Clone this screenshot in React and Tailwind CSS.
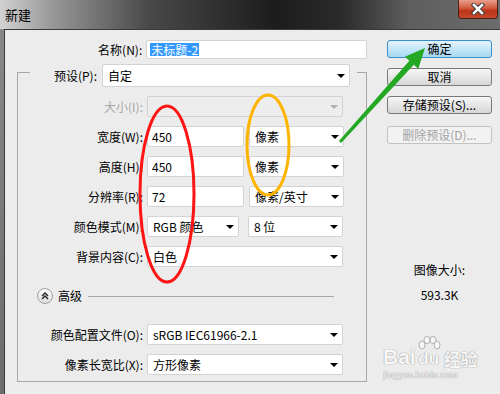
import React from 'react';

const Arrow = ({ disabled }) => (
  <span
    className={`w-0 h-0 border-x-[4px] border-x-transparent border-t-[4px] ${
      disabled ? 'border-t-[#b0b0b0]' : 'border-t-black'
    }`}
  />
);

const Select = ({ w, text, disabled, h = 'h-[21px]' }) => (
  <div
    className={`${w} ${h} flex items-center justify-between rounded-[2px] border pl-[5px] pr-[4px] ${
      disabled ? 'border-[#d2d2d2] bg-[#ededed]' : 'border-[#d3d3d3] bg-white'
    }`}
  >
    <span className="text-[12px] leading-none whitespace-nowrap">{text}</span>
    <Arrow disabled={disabled} />
  </div>
);

const Input = ({ w, text }) => (
  <div className={`${w} h-[21px] flex items-center rounded-[2px] border border-[#d3d3d3] bg-white pl-[4px]`}>
    <span className="text-[12px] leading-none">{text}</span>
  </div>
);

const Row = ({ label, disabled, children }) => (
  <div className="flex items-center h-[21px]">
    <div
      className={`w-[125px] text-right text-[12px] leading-none whitespace-nowrap ${
        disabled ? 'text-[#a8a8a8]' : 'text-black'
      }`}
    >
      {label}
    </div>
    <div className="ml-[4px] flex items-center gap-[5px]">{children}</div>
  </div>
);

const Button = ({ children, primary, disabled }) => (
  <div
    className={`h-[18px] w-[105px] flex items-center justify-center rounded-[3px] border text-[12px] leading-none ${
      primary
        ? 'border-[#3c8fcf] bg-[linear-gradient(to_bottom,#e6f5fd,#c4e6f8_50%,#a6d9f3)] text-black'
        : disabled
        ? 'border-[#c2c2c2] bg-[#f2f2f2] text-[#a2a2a2]'
        : 'border-[#7a7a7a] bg-[linear-gradient(to_bottom,#f6f6f6,#e6e6e6_50%,#d6d6d6)] text-black'
    }`}
  >
    {children}
  </div>
);

export default function App() {
  return (
    <div className="relative w-[500px] h-[394px] overflow-hidden flex flex-col bg-[linear-gradient(to_bottom,#8a8a8a,#6c6c6c)] font-['Noto_Sans_CJK_SC','Microsoft_YaHei',sans-serif] text-black">
      {/* title bar */}
      <div className="h-[29px] flex items-start justify-between bg-[linear-gradient(to_right,#d2d2d2_0%,#9a9a9a_10%,#484848_30%,#1c1c1c_55%,#2a2a2a_68%,#5e5e5e_82%,#6c6c6c_100%)]">
        <span className="pl-[5px] pt-[8px] text-[13px] leading-none">新建</span>
        <div className="mr-[2px] w-[40px] h-[19px] flex items-center justify-center rounded-b-[4px] border border-t-0 border-[#4a2018] bg-[linear-gradient(to_bottom,#e9a08c,#d25a3c_45%,#b8341a_60%,#c8482a)]">
          <svg width="14" height="12" viewBox="0 0 14 12">
            <path d="M3 2 L11 10 M11 2 L3 10" stroke="#3a3a3a" strokeWidth="4.5" strokeLinecap="square" />
            <path d="M3 2 L11 10 M11 2 L3 10" stroke="#ffffff" strokeWidth="2.5" strokeLinecap="square" />
          </svg>
        </div>
      </div>

      {/* body */}
      <div className="flex-1 ml-[4px] border-l border-t border-[#3a3a3a] bg-[#ececec] flex">
        <div className="w-[362px] flex flex-col">
          {/* name */}
          <div className="mt-[10px] flex items-center h-[19px]">
            <div className="w-[138px] text-right text-[12px] leading-none">名称(N):</div>
            <div className="ml-[4px] w-[222px] h-[19px] flex items-center rounded-[2px] border border-[#d3d3d3] bg-white pl-[3px]">
              <span className="bg-[#3399ff] text-white text-[12px] leading-[13px] px-[1px]">未标题-2</span>
            </div>
          </div>

          {/* preset fieldset */}
          <div className="mt-[13px] ml-[12px] w-[350px] border border-[#a8a8a8] pb-[6px] flex flex-col">
            <div className="-mt-[9px] ml-[12px] w-[327px] bg-[#ececec] flex items-center h-[23px]">
              <div className="w-[67px] text-right text-[12px] leading-none">预设(P):</div>
              <div className="ml-[5px]">
                <Select w="w-[248px]" h="h-[23px]" text="自定" />
              </div>
            </div>

            <div className="mt-[9px] flex flex-col gap-[9px]">
              <Row label="大小(I):" disabled>
                <Select w="w-[196px]" text="" disabled />
              </Row>
              <Row label="宽度(W):">
                <Input w="w-[97px]" text="450" />
                <Select w="w-[95px]" text="像素" />
              </Row>
              <Row label="高度(H):">
                <Input w="w-[97px]" text="450" />
                <Select w="w-[95px]" text="像素" />
              </Row>
              <Row label="分辨率(R):">
                <Input w="w-[97px]" text="72" />
                <Select w="w-[95px]" text="像素/英寸" />
              </Row>
              <Row label="颜色模式(M):">
                <Select w="w-[92px]" text="RGB 颜色" />
                <div className="ml-[4px]">
                  <Select w="w-[95px]" text="8 位" />
                </div>
              </Row>
              <Row label="背景内容(C):">
                <Select w="w-[196px]" text="白色" />
              </Row>
            </div>

            {/* advanced */}
            <div className="mt-[21px] h-[16px] flex items-center">
              <div className="ml-[19px] w-[16px] h-[16px] rounded-full border border-[#a0a0a0] bg-[linear-gradient(to_bottom,#ffffff,#dcdcdc)] flex items-center justify-center">
                <svg width="8" height="8" viewBox="0 0 8 8">
                  <path d="M1 4 L4 1 L7 4 M1 7 L4 4 L7 7" stroke="#222" strokeWidth="1.4" fill="none" />
                </svg>
              </div>
              <span className="ml-[5px] text-[12px] leading-none">高级</span>
              <div className="ml-[6px] mr-[32px] flex-1 h-px bg-[#a8a8a8]" />
            </div>

            <div className="mt-[20px] flex flex-col gap-[9px]">
              <Row label="颜色配置文件(O):">
                <Select w="w-[196px]" text="sRGB IEC61966-2.1" />
              </Row>
              <Row label="像素长宽比(X):">
                <Select w="w-[196px]" text="方形像素" />
              </Row>
            </div>
          </div>
        </div>

        {/* right column */}
        <div className="ml-auto mr-[8px] w-[105px] flex flex-col">
          <div className="mt-[10px] flex flex-col gap-[10px]">
            <Button primary>确定</Button>
            <Button>取消</Button>
            <Button>存储预设(S)...</Button>
          </div>
          <div className="mt-[12px]">
            <Button disabled>删除预设(D)...</Button>
          </div>
          <div className="mt-[120px] flex flex-col items-center gap-[13px] text-[12px] leading-none">
            <span>图像大小:</span>
            <span>593.3K</span>
          </div>
        </div>
      </div>

      {/* watermark */}
      <div className="absolute left-[383px] top-[336px] flex flex-col text-[#f7f7f7] [text-shadow:0_0_1px_#9a9a9a,0_0_1px_#9a9a9a] pointer-events-none">
        <div className="flex items-end">
          <span className="font-['Liberation_Sans',sans-serif] font-bold text-[21px] leading-none">Bai</span>
          <div className="relative flex flex-col items-center">
            <svg width="26" height="16" viewBox="0 0 26 16" className="mb-[-2px]">
              <g fill="#f7f7f7" stroke="#a0a0a0" strokeWidth="0.8">
                <ellipse cx="6" cy="9" rx="3" ry="4" />
                <ellipse cx="11" cy="4" rx="3" ry="3.6" />
                <ellipse cx="17" cy="4" rx="3" ry="3.6" />
                <ellipse cx="21" cy="9" rx="3" ry="4" />
              </g>
            </svg>
            <span className="font-['Liberation_Sans',sans-serif] font-bold text-[17px] leading-none">du</span>
          </div>
          <span className="ml-[2px] text-[17px] leading-none font-bold">经验</span>
        </div>
        <span className="mt-[3px] font-['Liberation_Serif',serif] text-[10px] leading-none">jingyan.baidu.com</span>
      </div>

      {/* annotations */}
      <svg className="absolute inset-0 pointer-events-none" width="500" height="394" viewBox="0 0 500 394">
        <ellipse cx="167" cy="194" rx="27" ry="88" fill="none" stroke="#ff1414" strokeWidth="3" />
        <ellipse cx="268" cy="145" rx="21" ry="50" fill="none" stroke="#ffb400" strokeWidth="3" />
        <polygon
          points="338.9,141 409.4,60.8 404.9,56.8 425,48 418.3,68.8 413.8,64.8 341.1,143"
          fill="#22a822"
        />
      </svg>
    </div>
  );
}
